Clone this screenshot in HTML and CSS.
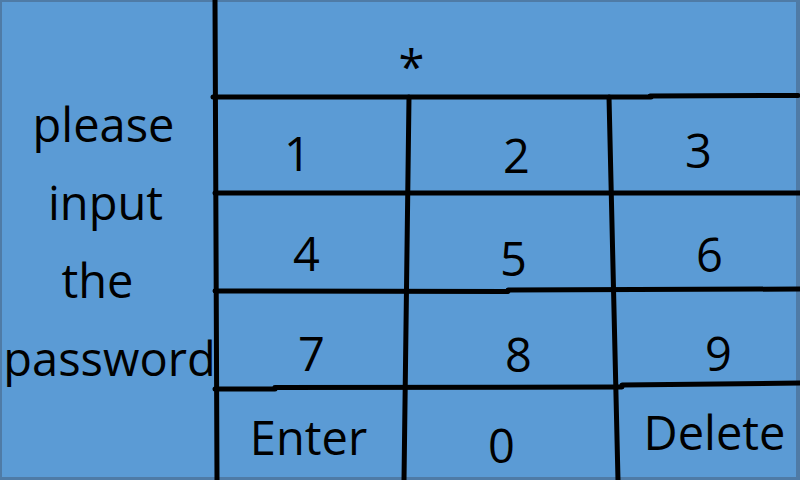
FILE: index.html
```html
<!DOCTYPE html>
<html>
<head>
<meta charset="utf-8">
<link rel="stylesheet" href="styles.css">
</head>
<body>
<div class="screen">
  <div class="prompt">
    <span class="word w-please">please</span>
    <span class="word w-input">input</span>
    <span class="word w-the">the</span>
    <span class="word w-password">password</span>
  </div>
  <div class="display"><span class="star">*</span></div>
  <div class="key k1"><span>1</span></div>
  <div class="key k2"><span>2</span></div>
  <div class="key k3"><span>3</span></div>
  <div class="key k4"><span>4</span></div>
  <div class="key k5"><span>5</span></div>
  <div class="key k6"><span>6</span></div>
  <div class="key k7"><span>7</span></div>
  <div class="key k8"><span>8</span></div>
  <div class="key k9"><span>9</span></div>
  <div class="key kenter"><span>Enter</span></div>
  <div class="key k0"><span>0</span></div>
  <div class="key kdel"><span>Delete</span></div>
  <svg class="lines" width="800" height="480" viewBox="0 0 800 480" aria-hidden="true">
    <g stroke="#000" stroke-width="5" stroke-linecap="round" fill="none">
      <line x1="215" y1="0" x2="217" y2="480"/>
      <line x1="213" y1="97" x2="651" y2="97"/>
      <line x1="650" y1="96" x2="798" y2="95.5"/>
      <line x1="215" y1="193" x2="800" y2="193"/>
      <line x1="215" y1="291" x2="508" y2="291.5"/>
      <line x1="508" y1="290" x2="800" y2="289"/>
      <line x1="215" y1="389" x2="275" y2="389"/>
      <line x1="275" y1="387.5" x2="622" y2="387"/>
      <line x1="622" y1="385" x2="800" y2="383"/>
      <line x1="409" y1="97" x2="404" y2="480"/>
      <line x1="609" y1="97" x2="618" y2="480"/>
    </g>
  </svg>
</div>
</body>
</html>
```

FILE: styles.css
```css
html, body {
  margin: 0;
  padding: 0;
}

body {
  width: 800px;
  height: 480px;
  overflow: hidden;
  font-family: "Open Sans", "Noto Sans", sans-serif;
  color: #000;
}

.screen {
  position: relative;
  box-sizing: border-box;
  width: 800px;
  height: 480px;
  background: #5b9bd5;
  border-style: solid;
  border-color: #4f7ba6;
  border-width: 2px 4px 3px 2px;
  display: grid;
  grid-template-columns: 213px 193px 205px 183px;
  grid-template-rows: 95px 96px 98px 96px 90px;
  font-size: 47px;
  line-height: 1;
}

.prompt {
  grid-column: 1;
  grid-row: 1 / 6;
  display: flex;
  flex-direction: column;
  align-items: center;
  justify-content: center;
  line-height: 78px;
  padding-top: 2px;
}

.word {
  display: block;
}

.w-please { transform: translateX(-5px); }
.w-input { transform: translateX(-3px); }
.w-the { transform: translateX(-11px); }
.w-password { transform: translateX(1px); }

.display {
  grid-column: 2 / 5;
  grid-row: 1;
  display: flex;
  align-items: center;
  justify-content: center;
}

.star {
  transform: translate(-94px, 17px);
}

.key {
  display: flex;
  align-items: center;
  justify-content: center;
}

.key span {
  transform: translate(var(--dx, 0), var(--dy, 0));
}

.k1 { --dx: -14px; --dy: 8px; }
.k2 { --dx: 6px; --dy: 10px; }
.k3 { --dx: -6px; --dy: 5px; }
.k4 { --dx: -5px; --dy: 11px; }
.k5 { --dx: 3px; --dy: 16px; }
.k6 { --dx: 5px; --dy: 12px; }
.k7 { --dx: 0px; --dy: 14px; }
.k8 { --dx: 8px; --dy: 15px; }
.k9 { --dx: 14px; --dy: 14px; }
.kenter { --dx: -3px; --dy: 5px; }
.k0 { --dx: -9px; --dy: 13px; }
.kdel { --dx: 10px; --dy: 0px; }

.lines {
  position: absolute;
  left: -2px;
  top: -2px;
  pointer-events: none;
}
```
